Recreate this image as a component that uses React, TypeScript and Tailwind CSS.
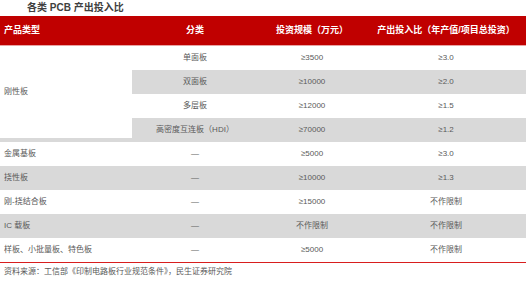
const rows = [
  { cat: '金属基板', sub: '—', inv: '≥5000', ratio: '≥3.0', gray: false },
  { cat: '挠性板', sub: '—', inv: '≥10000', ratio: '≥1.3', gray: true },
  { cat: '刚-挠结合板', sub: '—', inv: '≥15000', ratio: '不作限制', gray: false },
  { cat: 'IC 载板', sub: '—', inv: '不作限制', ratio: '不作限制', gray: true },
  { cat: '样板、小批量板、特色板', sub: '—', inv: '≥5000', ratio: '不作限制', gray: false }
]

const rigid = [
  { sub: '单面板', inv: '≥3500', ratio: '≥3.0', gray: false },
  { sub: '双面板', inv: '≥10000', ratio: '≥2.0', gray: true },
  { sub: '多层板', inv: '≥12000', ratio: '≥1.5', gray: false },
  { sub: '高密度互连板（HDI）', inv: '≥70000', ratio: '≥1.2', gray: true }
]

const cell = 'flex h-6 items-center justify-center'

export default function App() {
  return (
    <div className="h-[281px] w-[529px] bg-white font-['Liberation_Sans','Noto_Sans_CJK_SC',sans-serif] text-[8px] leading-none text-[#595959]">
      <div className="flex h-4 items-center pl-[27px] text-[10px] font-bold text-[#404040]">各类 PCB 产出投入比</div>

      <div className="w-[526px]">
        <div className="grid h-[30px] grid-cols-[132px_126px_108px_160px] items-center border-b border-[#e9a3a3] bg-[#c00000] text-[9px] font-bold text-white">
          <div className="pl-[4px]">产品类型</div>
          <div className="text-center">分类</div>
          <div className="text-center">投资规模（万元）</div>
          <div className="text-center">产出投入比（年产值/项目总投资）</div>
        </div>

        <div className="grid grid-cols-[132px_126px_108px_160px]">
          <div className="row-span-4 flex flex-col">
            <div className="flex flex-1 items-center pl-[4px]">刚性板</div>
            <div className="h-1 bg-[#d9d9d9]" />
          </div>
          {rigid.map((r) => (
            <div key={r.sub} className={`col-span-3 grid grid-cols-[126px_108px_160px] ${r.gray ? 'bg-[#d9d9d9]' : ''}`}>
              <div className={cell}>{r.sub}</div>
              <div className={cell}>{r.inv}</div>
              <div className={cell}>{r.ratio}</div>
            </div>
          ))}
        </div>

        {rows.map((r) => (
          <div
            key={r.cat}
            className={`grid h-6 grid-cols-[132px_126px_108px_160px] items-center ${r.gray ? 'bg-[#d9d9d9]' : ''}`}
          >
            <div className="pl-[4px]">{r.cat}</div>
            <div className={cell}>{r.sub}</div>
            <div className={cell}>{r.inv}</div>
            <div className={cell}>{r.ratio}</div>
          </div>
        ))}

        <div className="h-px bg-[#d81e1e]" />
      </div>

      <div className="flex h-[18px] items-center pl-[4px]">资料来源：工信部《印制电路板行业规范条件》，民生证券研究院</div>
    </div>
  )
}
